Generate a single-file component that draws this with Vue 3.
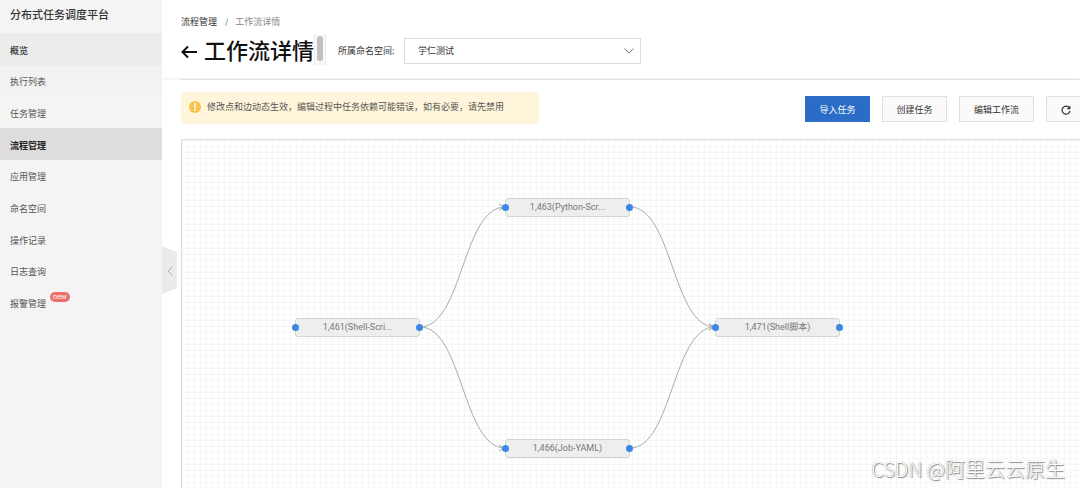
<script setup>
const menu = [
  { label: '概览', tone: 'group' },
  { label: '执行列表', tone: 'hover' },
  { label: '任务管理' },
  { label: '流程管理', tone: 'active' },
  { label: '应用管理' },
  { label: '命名空间' },
  { label: '操作记录' },
  { label: '日志查询' },
  { label: '报警管理', badge: 'new' },
]

const nodes = [
  { id: 1461, text: '1,461(Shell-Scri...', x: 113, y: 178 },
  { id: 1463, text: '1,463(Python-Scr...', x: 323, y: 58 },
  { id: 1466, text: '1,466(Job-YAML)', x: 323, y: 299 },
  { id: 1471, text: '1,471(Shell脚本)', x: 533, y: 178 },
]

const links = [
  [1461, 1463],
  [1461, 1466],
  [1463, 1471],
  [1466, 1471],
]

const NODE_WIDTH = 125
const PORT_Y = 9

const edges = links.map(([from, to]) => {
  const a = nodes.find((n) => n.id === from)
  const b = nodes.find((n) => n.id === to)
  const x1 = a.x + NODE_WIDTH
  const y1 = a.y + PORT_Y
  const x2 = b.x
  const y2 = b.y + PORT_Y
  const mid = (x1 + x2) / 2
  return `M${x1} ${y1}C${mid} ${y1} ${mid} ${y2} ${x2} ${y2}`
})
</script>

<template>
  <div class="app">
    <aside class="sidebar">
      <div class="brand">分布式任务调度平台</div>
      <nav class="menu">
        <a v-for="item in menu" :key="item.label" href="#" class="menu-item" :class="item.tone">
          {{ item.label }}<span v-if="item.badge" class="badge">{{ item.badge }}</span>
        </a>
      </nav>
      <button class="collapse" type="button" aria-label="收起菜单">
        <svg width="6" height="10" viewBox="0 0 6 10"><path d="M5.500 0.500L1 5l4.500 4.500" /></svg>
      </button>
    </aside>

    <main class="main">
      <header class="header">
        <nav class="crumbs">
          <a href="#">流程管理</a><span class="slash">/</span><span>工作流详情</span>
        </nav>
        <div class="title-row">
          <button class="back" type="button" aria-label="返回">
            <svg width="17" height="14" viewBox="0 0 17 14"><path d="M7 1.500L1.500 7 7 12.500M1.500 7H16" /></svg>
          </button>
          <h1>工作流详情</h1>
          <div class="scroll-track"><div class="scroll-thumb"></div></div>
          <label for="namespace">所属命名空间:</label>
          <div class="select-wrap">
            <select id="namespace">
              <option>学仁测试</option>
            </select>
            <svg class="chevron" width="10" height="6" viewBox="0 0 10 6"><path d="M0.500 0.500L5 5l4.500-4.500" /></svg>
          </div>
        </div>
      </header>

      <section class="content">
        <div class="toolbar">
          <div class="notice">
            <svg width="12" height="12" viewBox="0 0 12 12">
              <circle cx="6" cy="6" r="6" fill="#f8c351" />
              <path d="M6 2.500v4.200" stroke="#fff" stroke-width="1.500" stroke-linecap="round" />
              <circle cx="6" cy="9" r="0.900" fill="#fff" />
            </svg>
            <span>修改点和边动态生效，编辑过程中任务依赖可能错误，如有必要，请先禁用</span>
          </div>
          <div class="actions">
            <button class="btn primary" type="button">导入任务</button>
            <button class="btn" type="button">创建任务</button>
            <button class="btn wide" type="button">编辑工作流</button>
            <button class="btn icon" type="button" aria-label="刷新">
              <svg width="10" height="10" viewBox="0 0 10 10">
                <path d="M8.300 2.700A4 4 0 1 0 9 6" fill="none" stroke="#333" stroke-width="1.200" />
                <path d="M9.400 0.600v3.700H5.700z" fill="#333" />
              </svg>
            </button>
          </div>
        </div>

        <div class="canvas">
          <svg class="edges">
            <defs>
              <marker id="arrow" markerWidth="8" markerHeight="8" refX="6" refY="4" orient="auto">
                <path d="M0 1L5 4L0 7" fill="none" stroke="#aaa" />
              </marker>
            </defs>
            <path v-for="d in edges" :key="d" :d="d" marker-end="url(#arrow)" />
          </svg>
          <div v-for="n in nodes" :key="n.id" class="node" :style="{ left: n.x + 'px', top: n.y + 'px' }">
            {{ n.text }}
          </div>
          <div class="watermark">CSDN @阿里云云原生</div>
        </div>
      </section>
    </main>
  </div>
</template>

<style>
body {
  margin: 0;
  overflow: hidden;
}
</style>

<style scoped>
.app {
  display: flex;
  min-height: 100vh;
  font: 9px/16px Inter, "Noto Sans CJK SC", sans-serif;
  color: #333;
  background: #fff;
}
.app * {
  box-sizing: border-box;
}
a {
  color: inherit;
  text-decoration: none;
}
button,
select {
  font: inherit;
  color: inherit;
  margin: 0;
}

.sidebar {
  position: relative;
  flex: none;
  width: 162px;
  background: #f4f4f4;
}
.brand {
  height: 33px;
  padding: 0 10px;
  font-size: 11px;
  font-weight: 500;
  line-height: 31px;
}
.menu {
  display: grid;
  grid-template-rows: repeat(9, 1fr);
  height: 285px;
}
.menu-item {
  display: flex;
  align-items: center;
  padding: 4px 10px 0;
  color: #555;
}
.menu-item.group {
  background: #ececec;
  color: #333;
  font-weight: 500;
}
.menu-item.hover {
  background: #f2f2f2;
}
.menu-item.active {
  background: #ddd;
  color: #222;
  font-weight: 700;
}
.badge {
  height: 10px;
  margin: 0 0 14px 4px;
  padding: 0 3px;
  border-radius: 5px;
  background: #e9706b;
  color: #fff;
  font-size: 7px;
  line-height: 10px;
}
.collapse {
  position: absolute;
  z-index: 2;
  top: 246px;
  left: 100%;
  display: flex;
  align-items: center;
  justify-content: center;
  width: 15px;
  height: 48px;
  padding: 2px 0 0;
  border: 0;
  background: #ebebeb;
  clip-path: polygon(0 0, 100% 6px, 100% 42px, 0 100%);
}
.collapse path {
  fill: none;
  stroke: #aaa;
}

.main {
  display: flex;
  flex: 1;
  flex-direction: column;
  min-width: 0;
}
.header {
  height: 78px;
  padding: 14px 19px 0;
  box-shadow: 0 1px 3px rgba(0, 0, 0, 0.08);
}
.crumbs {
  display: flex;
  color: #888;
}
.crumbs a {
  color: #333;
}
.slash {
  padding: 0 7px 0 8px;
}
.title-row {
  display: flex;
  align-items: center;
  height: 42px;
}
.back {
  display: flex;
  padding: 2px 0 0;
  border: 0;
  background: none;
}
.back path {
  fill: none;
  stroke: #111;
  stroke-width: 2;
}
h1 {
  margin: 0 0 0 6px;
  color: #111;
  font-size: 22px;
  font-weight: 500;
  line-height: 32px;
  white-space: nowrap;
}
.scroll-track {
  align-self: flex-start;
  width: 12px;
  height: 31px;
  margin-top: 4px;
  padding: 2px;
  background: #f8f8f8;
  border: solid #eee;
  border-width: 0 1px;
}
.scroll-thumb {
  width: 6px;
  height: 25px;
  border-radius: 3px;
  background: #c1c1c1;
}
label {
  width: 66px;
  margin-left: 12px;
  white-space: nowrap;
}
.select-wrap {
  position: relative;
  width: 237px;
}
select {
  display: block;
  width: 100%;
  height: 26px;
  padding: 0 13px;
  border: 1px solid #ddd;
  border-radius: 0;
  background: #fff;
  appearance: none;
}
.chevron {
  position: absolute;
  top: 10px;
  right: 7px;
  pointer-events: none;
}
.chevron path {
  fill: none;
  stroke: #777;
}

.content {
  display: flex;
  flex: 1;
  flex-direction: column;
  margin: 1px 0 0 19px;
  border-top: 1px solid #e4e4e7;
  overflow: hidden;
}
.toolbar {
  display: flex;
  align-items: flex-start;
  justify-content: space-between;
  margin-right: -5px;
  padding: 12px 0 15px;
}
.notice {
  display: flex;
  align-items: center;
  gap: 6px;
  width: 358px;
  height: 32px;
  padding: 0 8px 3px;
  background: #fff5db;
  color: #555;
}
.actions {
  display: flex;
  gap: 12px;
  padding-top: 4px;
}
.btn {
  display: flex;
  align-items: center;
  justify-content: center;
  width: 65px;
  height: 26px;
  padding: 1px 0 0;
  border: 1px solid #e0e0e0;
  background: #fafafa;
}
.btn.primary {
  border-color: #2f6fc9;
  background: #2b6cc6;
  color: #fff;
}
.btn.wide {
  width: 75px;
}
.btn.icon {
  width: 39px;
}
.canvas {
  position: relative;
  flex: 1;
  min-height: 349px;
  border: solid #ddd;
  border-width: 1px 0 0 1px;
  background-image: linear-gradient(90deg, #f6f6f6 1px, transparent 1px), linear-gradient(#f6f6f6 1px, transparent 1px);
  background-size: 6px 6px;
}
.edges {
  position: absolute;
  inset: 0;
  width: 100%;
  height: 100%;
}
.edges > path {
  fill: none;
  stroke: #aaa;
}
.node {
  position: absolute;
  width: 125px;
  height: 19px;
  border: 1px solid #d4d4d4;
  border-radius: 3px;
  background: #eee;
  color: #777;
  font-family: Roboto, "Noto Sans CJK SC", sans-serif;
  line-height: 17px;
  text-align: center;
  white-space: nowrap;
}
.node::before,
.node::after {
  content: "";
  position: absolute;
  top: 5px;
  width: 7px;
  height: 7px;
  border-radius: 50%;
  background: #3d87e4;
}
.node::before {
  left: -4px;
}
.node::after {
  right: -4px;
}
.watermark {
  position: absolute;
  right: 15px;
  bottom: 4px;
  color: #fff;
  font: 300 20px/30px "Noto Sans CJK SC", sans-serif;
  text-shadow: 0 0 1px #888, 1px 1px 1px #888;
}
</style>
